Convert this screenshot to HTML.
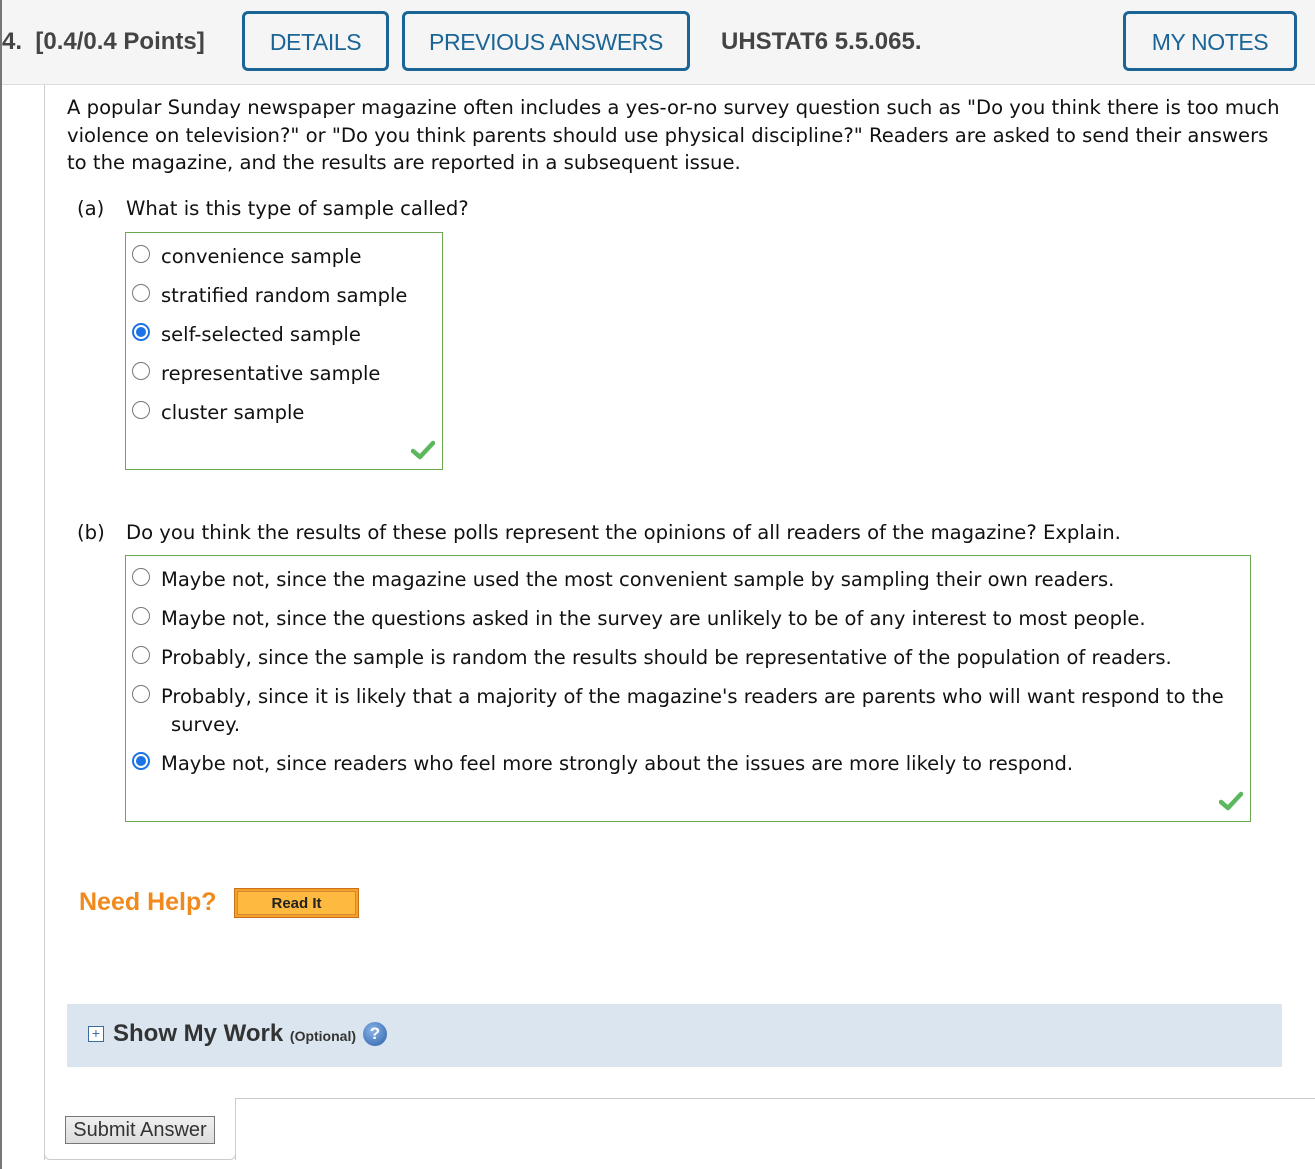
<!DOCTYPE html>
<html><head><meta charset="utf-8"><style>
*{margin:0;padding:0;box-sizing:border-box}
body{width:1315px;height:1169px;background:#fff;position:relative;overflow:hidden;font-family:"DejaVu Sans","Liberation Sans",sans-serif;color:#111}
.a{position:absolute;white-space:nowrap}
.hdr{position:absolute;left:0;top:0;width:1315px;height:85px;background:#f5f5f5;border-bottom:1px solid #ddd}
.hb{position:absolute;top:11px;height:60px;border:3px solid #1a6496;border-radius:6px;color:#1a6496;font-family:"Liberation Sans",sans-serif;font-size:23px;letter-spacing:-0.4px;display:flex;align-items:center;justify-content:center;background:#f5f5f5;padding-top:2px}
.ht{position:absolute;top:28px;font-family:"Liberation Sans",sans-serif;font-weight:bold;font-size:24px;color:#444}
.t{font-size:19.6px;line-height:27.5px}
.o{font-size:19.5px;line-height:27.5px}
.box{position:absolute;border:1px solid #6aa84f}
.r{position:absolute;width:18px;height:18px;border:1.5px solid #777;border-radius:50%;background:#fff}
.r.s{border:2px solid #1a73e8}
.r.s::after{content:"";position:absolute;left:2px;top:2px;width:10px;height:10px;border-radius:50%;background:#1a73e8}
.chk{position:absolute}
</style></head><body>
<div class="hdr"></div>
<div style="position:absolute;left:0;top:0;width:2px;height:1169px;background:#777"></div>
<div class="ht" style="left:2px">4.&nbsp; [0.4/0.4 Points]</div>
<div class="hb" style="left:242px;width:147px">DETAILS</div>
<div class="hb" style="left:402px;width:288px">PREVIOUS ANSWERS</div>
<div class="ht" style="left:721px">UHSTAT6 5.5.065.</div>
<div class="hb" style="left:1123px;width:174px">MY NOTES</div>

<div style="position:absolute;left:44px;top:85px;width:1px;height:1075px;background:#ccc"></div>
<div style="position:absolute;left:44px;top:1098px;width:192px;height:62px;border:1px solid #ccc;border-top:none;border-radius:0 0 6px 6px"></div>
<div style="position:absolute;left:235px;top:1098px;width:1080px;height:1px;background:#ccc"></div>
<div style="position:absolute;left:235px;top:1098px;width:1px;height:62px;background:#ccc"></div>

<div class="a t" style="left:67px;top:94px">A popular Sunday newspaper magazine often includes a yes-or-no survey question such as "Do you think there is too much<br>violence on television?" or "Do you think parents should use physical discipline?" Readers are asked to send their answers<br>to the magazine, and the results are reported in a subsequent issue.</div>
<div class="a t" style="left:77px;top:195px">(a)</div>
<div class="a t" style="left:126px;top:195px">What is this type of sample called?</div>

<div class="box" style="left:125px;top:232px;width:318px;height:238px"></div>
<div class="r" style="left:132px;top:245px"></div><div class="a o" style="left:161px;top:243px">convenience sample</div>
<div class="r" style="left:132px;top:284px"></div><div class="a o" style="left:161px;top:282px">stratified random sample</div>
<div class="r s" style="left:132px;top:323px"></div><div class="a o" style="left:161px;top:321px">self-selected sample</div>
<div class="r" style="left:132px;top:362px"></div><div class="a o" style="left:161px;top:360px">representative sample</div>
<div class="r" style="left:132px;top:401px"></div><div class="a o" style="left:161px;top:399px">cluster sample</div>
<svg class="chk" style="left:411px;top:440px" width="24" height="20" viewBox="0 0 24 20"><path d="M2 11 L9 17 L22 3" fill="none" stroke="#5cb85c" stroke-width="4.5" stroke-linecap="round" stroke-linejoin="round"/></svg>

<div class="a t" style="left:77px;top:519px">(b)</div>
<div class="a t" style="left:126px;top:519px">Do you think the results of these polls represent the opinions of all readers of the magazine? Explain.</div>
<div class="box" style="left:125px;top:555px;width:1126px;height:267px"></div>
<div class="r" style="left:132px;top:568px"></div><div class="a o" style="left:161px;top:566px">Maybe not, since the magazine used the most convenient sample by sampling their own readers.</div>
<div class="r" style="left:132px;top:607px"></div><div class="a o" style="left:161px;top:605px">Maybe not, since the questions asked in the survey are unlikely to be of any interest to most people.</div>
<div class="r" style="left:132px;top:646px"></div><div class="a o" style="left:161px;top:644px">Probably, since the sample is random the results should be representative of the population of readers.</div>
<div class="r" style="left:132px;top:685px"></div><div class="a o" style="left:161px;top:683px">Probably, since it is likely that a majority of the magazine's readers are parents who will want respond to the</div>
<div class="a o" style="left:171px;top:711px">survey.</div>
<div class="r s" style="left:132px;top:752px"></div><div class="a o" style="left:161px;top:750px">Maybe not, since readers who feel more strongly about the issues are more likely to respond.</div>
<svg class="chk" style="left:1219px;top:791px" width="24" height="20" viewBox="0 0 24 20"><path d="M2 11 L9 17 L22 3" fill="none" stroke="#5cb85c" stroke-width="4.5" stroke-linecap="round" stroke-linejoin="round"/></svg>

<div class="a" style="left:79px;top:888px;font-family:'Liberation Sans',sans-serif;font-weight:bold;font-size:25px;color:#f08a1c">Need Help?</div>
<div style="position:absolute;left:234px;top:888px;width:125px;height:30px;border:1px solid #c8701a;background:#f6a02c;padding:2px"><div style="width:100%;height:100%;background:#fdb940;border:1px solid #d78a2a;font-family:'Liberation Sans',sans-serif;font-weight:bold;font-size:15px;color:#222;text-align:center;line-height:23px">Read It</div></div>

<div style="position:absolute;left:67px;top:1004px;width:1215px;height:63px;background:#dae5ef"></div>
<div style="position:absolute;left:88px;top:1026px;width:16px;height:16px;border:1px solid #3a6aa0;background:#fff;font-size:14px;line-height:13px;text-align:center;color:#3a6aa0;font-family:'Liberation Sans',sans-serif">+</div>
<div class="a" style="left:113px;top:1020px;font-family:'Liberation Sans',sans-serif;font-weight:bold;font-size:24px;color:#333">Show My Work <span style="font-size:14px">(Optional)</span></div>
<div style="position:absolute;left:363px;top:1022px;width:24px;height:24px;border-radius:50%;background:radial-gradient(circle at 40% 35%,#8ab4e8,#2a5ea8);color:#fff;font-family:'Liberation Sans',sans-serif;font-weight:bold;font-size:17px;text-align:center;line-height:24px">?</div>

<div style="position:absolute;left:65px;top:1116px;width:150px;height:28px;border:1px solid #777;background:linear-gradient(#f0f0f0,#ddd);font-family:'Liberation Sans',sans-serif;font-size:20px;color:#333;text-align:center;line-height:26px">Submit Answer</div>
</body></html>
